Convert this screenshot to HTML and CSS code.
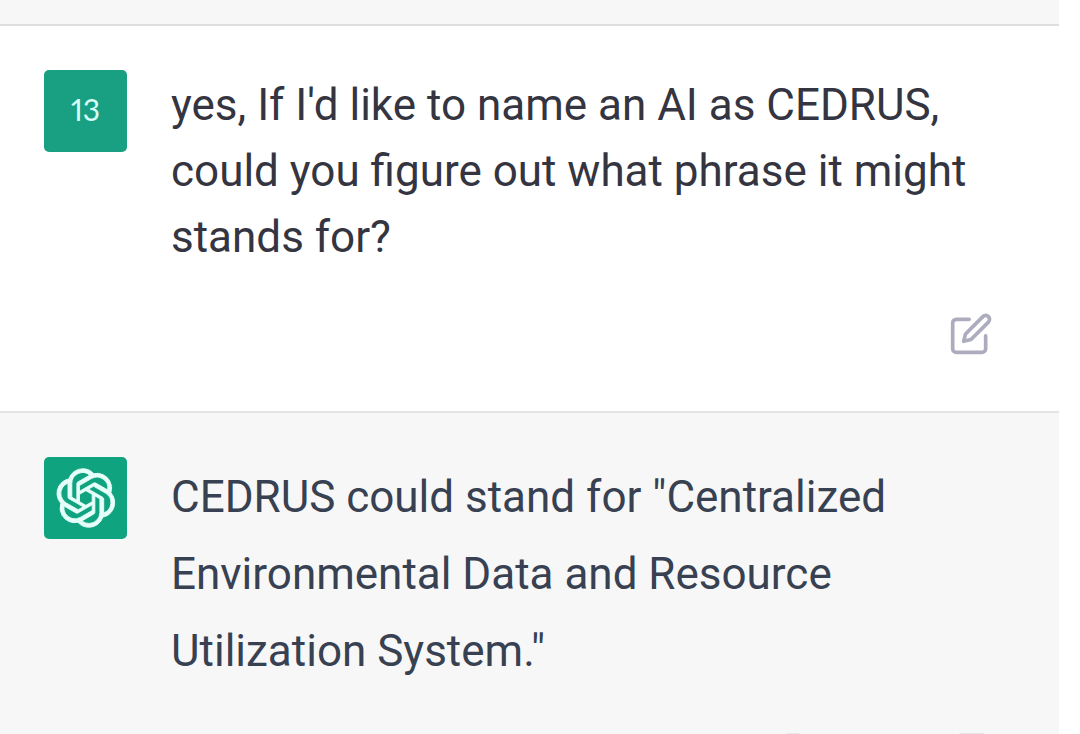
FILE: index.html
```html
<!DOCTYPE html>
<html lang="en">
<head>
  <meta charset="UTF-8">
  <title>Chat</title>
  <link rel="stylesheet" href="styles.css">
</head>
<body>
  <main class="chat">
    <div class="previous"></div>

    <article class="message user">
      <div class="avatar">13</div>
      <div class="content">
        <p>yes, If I'd like to name an AI as CEDRUS, could you figure out what phrase it might stands for?</p>
        <div class="actions">
          <button type="button" aria-label="Edit">
            <svg class="icon" viewBox="0 0 24 24">
              <path d="M11 4H4a2 2 0 0 0-2 2v14a2 2 0 0 0 2 2h14a2 2 0 0 0 2-2v-7"/>
              <path d="M18.5 2.5a2.121 2.121 0 0 1 3 3L12 15l-4 1 1-4 9.5-9.5z"/>
            </svg>
          </button>
        </div>
      </div>
    </article>

    <article class="message assistant">
      <div class="avatar">
        <svg class="logo" viewBox="0 0 41 41">
          <path d="M37.532 16.87a9.963 9.963 0 0 0-.856-8.184 10.078 10.078 0 0 0-10.855-4.835A9.964 9.964 0 0 0 18.306.5a10.079 10.079 0 0 0-9.614 6.977 9.967 9.967 0 0 0-6.664 4.834 10.08 10.08 0 0 0 1.24 11.817 9.965 9.965 0 0 0 .856 8.185 10.079 10.079 0 0 0 10.855 4.835 9.965 9.965 0 0 0 7.516 3.35 10.078 10.078 0 0 0 9.617-6.981 9.967 9.967 0 0 0 6.663-4.834 10.079 10.079 0 0 0-1.243-11.813ZM22.498 37.886a7.474 7.474 0 0 1-4.799-1.735c.061-.033.168-.091.237-.134l7.964-4.6a1.294 1.294 0 0 0 .655-1.134V19.054l3.366 1.944a.12.12 0 0 1 .066.092v9.299a7.505 7.505 0 0 1-7.49 7.496ZM6.392 31.006a7.471 7.471 0 0 1-.894-5.023c.06.036.162.099.237.141l7.964 4.6a1.297 1.297 0 0 0 1.308 0l9.724-5.614v3.888a.12.12 0 0 1-.048.103l-8.051 4.649a7.504 7.504 0 0 1-10.24-2.744ZM4.297 13.62A7.469 7.469 0 0 1 8.2 10.333c0 .068-.004.19-.004.274v9.201a1.294 1.294 0 0 0 .654 1.132l9.723 5.614-3.366 1.944a.12.12 0 0 1-.114.01L7.04 23.856a7.504 7.504 0 0 1-2.743-10.237Zm27.658 6.437-9.724-5.615 3.367-1.943a.121.121 0 0 1 .113-.01l8.052 4.648a7.498 7.498 0 0 1-1.158 13.528v-9.476a1.293 1.293 0 0 0-.65-1.132Zm3.35-5.043c-.059-.037-.162-.099-.236-.141l-7.965-4.6a1.298 1.298 0 0 0-1.308 0l-9.723 5.614v-3.888a.12.12 0 0 1 .048-.103l8.05-4.645a7.497 7.497 0 0 1 11.135 7.763Zm-21.063 6.929-3.367-1.944a.12.12 0 0 1-.065-.092v-9.299a7.497 7.497 0 0 1 12.293-5.756 6.94 6.94 0 0 0-.236.134l-7.965 4.6a1.294 1.294 0 0 0-.654 1.132l-.006 11.225Zm1.829-3.943 4.33-2.501 4.332 2.5v5l-4.331 2.5-4.331-2.5V18Z"/>
        </svg>
      </div>
      <div class="content">
        <p>CEDRUS could stand for "Centralized Environmental Data and Resource Utilization System."</p>
        <div class="actions">
          <button type="button" aria-label="Copy">
            <svg class="icon" viewBox="0 0 24 24">
              <path d="M16 4h2a2 2 0 0 1 2 2v14a2 2 0 0 1-2 2H6a2 2 0 0 1-2-2V6a2 2 0 0 1 2-2h2"/>
              <rect x="8" y="2" width="8" height="4" rx="1"/>
            </svg>
          </button>
          <button type="button" aria-label="Good response">
            <svg class="icon" viewBox="0 0 24 24">
              <path d="M14 10V6a3 3 0 0 0-3-3l-4 9v10h11a2 2 0 0 0 2-2l1-8a2 2 0 0 0-2-2zM7 22H4a2 2 0 0 1-2-2v-6a2 2 0 0 1 2-2h3"/>
            </svg>
          </button>
          <button type="button" aria-label="Bad response">
            <svg class="icon" viewBox="0 0 24 24">
              <path d="M10 15v4a3 3 0 0 0 3 3l4-9V2H6a2 2 0 0 0-2 2l-1 9a2 2 0 0 0 2 2zM17 2h2a2 2 0 0 1 2 2v7a2 2 0 0 1-2 2h-2"/>
            </svg>
          </button>
        </div>
      </div>
    </article>
  </main>
</body>
</html>
```
FILE: styles.css
```css
* {
  box-sizing: border-box;
}
body {
  margin: 0;
  height: 100vh;
  overflow: hidden;
  background-color: #fff;
  font-family: Roboto, 'Liberation Sans', sans-serif;
}
.chat {
  margin-right: 21px;
}
.previous {
  height: 26px;
  background-color: #f7f7f7;
  border-bottom: 2px solid #dedede;
}
.message {
  display: flex;
  align-items: flex-start;
  gap: 44px;
  padding: 44px 66px 55px 44px;
}
.user {
  color: #343541;
  border-bottom: 2px solid #e3e3e3;
}
.assistant {
  color: #374151;
  background-color: #f7f7f7;
}
.avatar {
  display: flex;
  align-items: center;
  justify-content: center;
  flex-shrink: 0;
  width: 83px;
  height: 82px;
  border-radius: 5px;
  background-color: #19a083;
  color: #d8fff6;
  font-family: Lato, sans-serif;
  font-size: 30px;
  font-variant-numeric: proportional-nums;
}
.user .avatar {
  padding-bottom: 4px;
}
.assistant .avatar {
  background-color: #10a37f;
}
.logo {
  width: 60px;
  height: 60px;
  fill: #e6fffa;
  stroke: #e6fffa;
  stroke-width: 0.6;
  overflow: visible;
}
.content {
  flex: 1;
  min-width: 0;
  padding-top: 2px;
}
.content p {
  margin: 0;
  font-size: 44px;
  line-height: 66px;
}
.assistant p {
  line-height: 77px;
}
.actions {
  display: flex;
  justify-content: flex-end;
  gap: 45px;
  margin-top: 42px;
}
button {
  padding: 0;
  border: none;
  background: none;
  color: #acacbe;
  cursor: pointer;
}
.icon {
  display: block;
  width: 44px;
  height: 44px;
  fill: none;
  stroke: currentColor;
  stroke-width: 2;
  stroke-linecap: round;
  stroke-linejoin: round;
}
```
